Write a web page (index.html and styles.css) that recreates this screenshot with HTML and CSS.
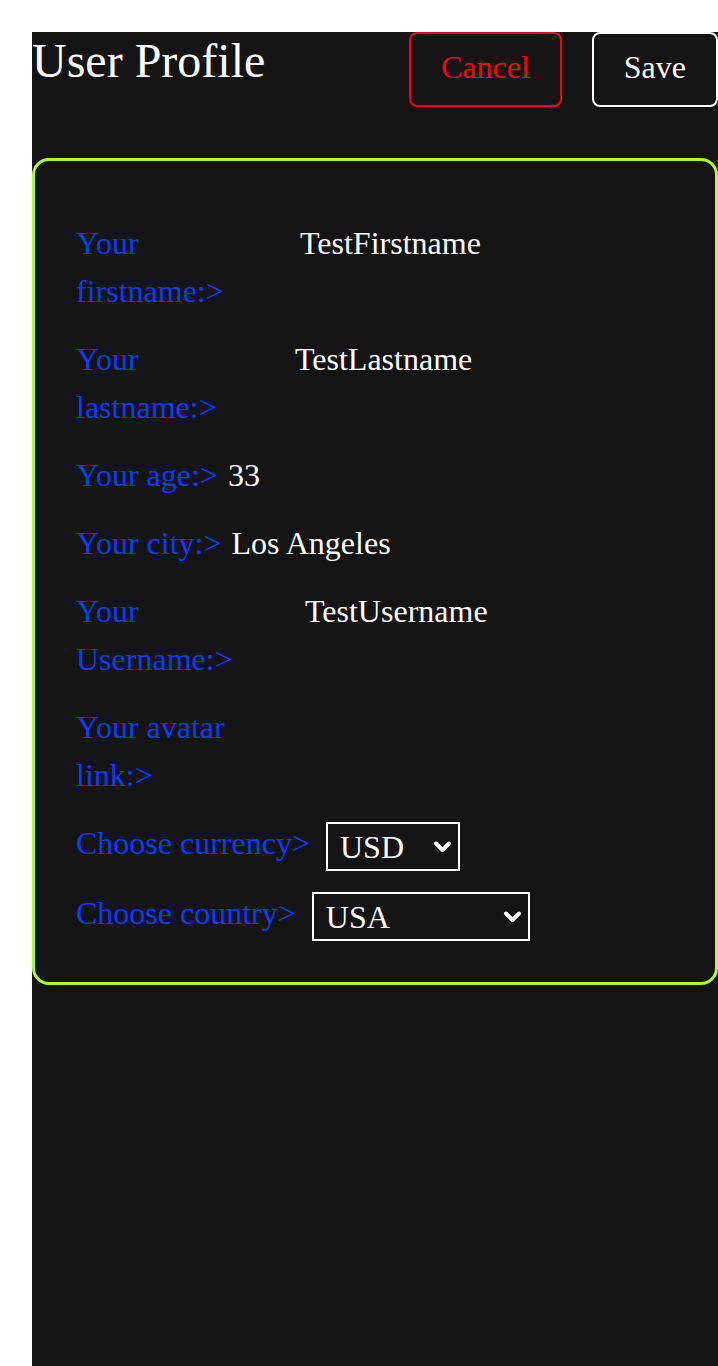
FILE: index.html
```html
<!DOCTYPE html>
<html lang="en">
<head>
<meta charset="utf-8">
<title>User Profile</title>
<link rel="stylesheet" href="styles.css">
</head>
<body>
<div class="page">
  <header class="header">
    <h1 class="title">User Profile</h1>
    <div class="actions">
      <button class="btn btn--cancel" type="button">Cancel</button>
      <button class="btn btn--save" type="button">Save</button>
    </div>
  </header>
  <section class="card">
    <div class="row"><span class="label label--first">Your firstname:&gt;</span><span class="value">TestFirstname</span></div>
    <div class="row"><span class="label label--last">Your lastname:&gt;</span><span class="value">TestLastname</span></div>
    <div class="row"><span class="label">Your age:&gt;</span><span class="value">33</span></div>
    <div class="row"><span class="label">Your city:&gt;</span><span class="value">Los Angeles</span></div>
    <div class="row"><span class="label label--user">Your Username:&gt;</span><span class="value">TestUsername</span></div>
    <div class="row"><span class="label label--avatar">Your avatar link:&gt;</span><span class="value"></span></div>
    <div class="row row--select">
      <span class="label">Choose currency&gt;</span>
      <span class="select-wrap">
        <select class="select select--currency">
          <option>USD</option>
          <option>EUR</option>
          <option>UAH</option>
        </select>
        <svg class="chevron" viewBox="0 0 19 13" width="19" height="13" aria-hidden="true"><polyline points="3,3 9.5,9.5 16,3" fill="none" stroke="#fff" stroke-width="4" stroke-linecap="round" stroke-linejoin="round"/></svg>
      </span>
    </div>
    <div class="row row--select">
      <span class="label">Choose country&gt;</span>
      <span class="select-wrap">
        <select class="select select--country">
          <option>USA</option>
          <option>Ukraine</option>
          <option>Germany</option>
        </select>
        <svg class="chevron" viewBox="0 0 19 13" width="19" height="13" aria-hidden="true"><polyline points="3,3 9.5,9.5 16,3" fill="none" stroke="#fff" stroke-width="4" stroke-linecap="round" stroke-linejoin="round"/></svg>
      </span>
    </div>
  </section>
</div>
</body>
</html>
```

FILE: styles.css
```css
html, body {
  background: #ffffff;
}

body {
  margin: 32px 0 0 32px;
  font-family: "Liberation Serif", "Times New Roman", serif;
}

.page {
  background: #141414;
  min-height: calc(100vh - 32px);
  color: #ffffff;
}

.header {
  display: flex;
  justify-content: space-between;
  align-items: flex-start;
}

.title {
  margin: 1px 0 0;
  font-size: 48px;
  font-weight: normal;
  line-height: normal;
  color: #ffffff;
}

.actions {
  display: flex;
  gap: 30px;
}

.btn {
  font-family: "Liberation Serif", "Times New Roman", serif;
  font-size: 32px;
  line-height: normal;
  background: transparent;
  border: 2px solid #ffffff;
  border-radius: 8px;
  padding: 15px 30px 19px;
  color: #ffffff;
  cursor: pointer;
}

.btn--cancel {
  color: #ff0000;
  border-color: #ff0000;
}

.card {
  margin-top: 51px;
  border: 3px solid #adff2f;
  border-radius: 17px;
  padding: 58px 40px 41px 41px;
  display: flex;
  flex-direction: column;
  gap: 20px;
}

.row {
  display: flex;
  align-items: baseline;
  gap: 10px;
  font-size: 32px;
  line-height: 48px;
}

.row--select {
  align-items: flex-start;
}

.row--select + .row--select {
  margin-top: -2px;
}

.label {
  color: #0a3cff;
  flex-shrink: 0;
}

.label--first { width: 214px; }
.label--last { width: 209px; }
.label--user { width: 219px; }
.label--avatar { width: 200px; }

.value {
  color: #ffffff;
}

.select-wrap {
  position: relative;
  display: inline-block;
  margin: 3px 0 0 6px;
}

.select {
  appearance: none;
  -webkit-appearance: none;
  box-sizing: border-box;
  height: 49px;
  border: 2px solid #ffffff;
  border-radius: 0;
  background: #141414;
  color: #ffffff;
  font-family: "Liberation Serif", "Times New Roman", serif;
  font-size: 32px;
  padding: 0 12px;
  display: block;
}

.select--currency { width: 134px; }
.select--country { width: 218px; }

.chevron {
  position: absolute;
  right: 8px;
  top: 50%;
  transform: translateY(-50%);
  pointer-events: none;
}
```
